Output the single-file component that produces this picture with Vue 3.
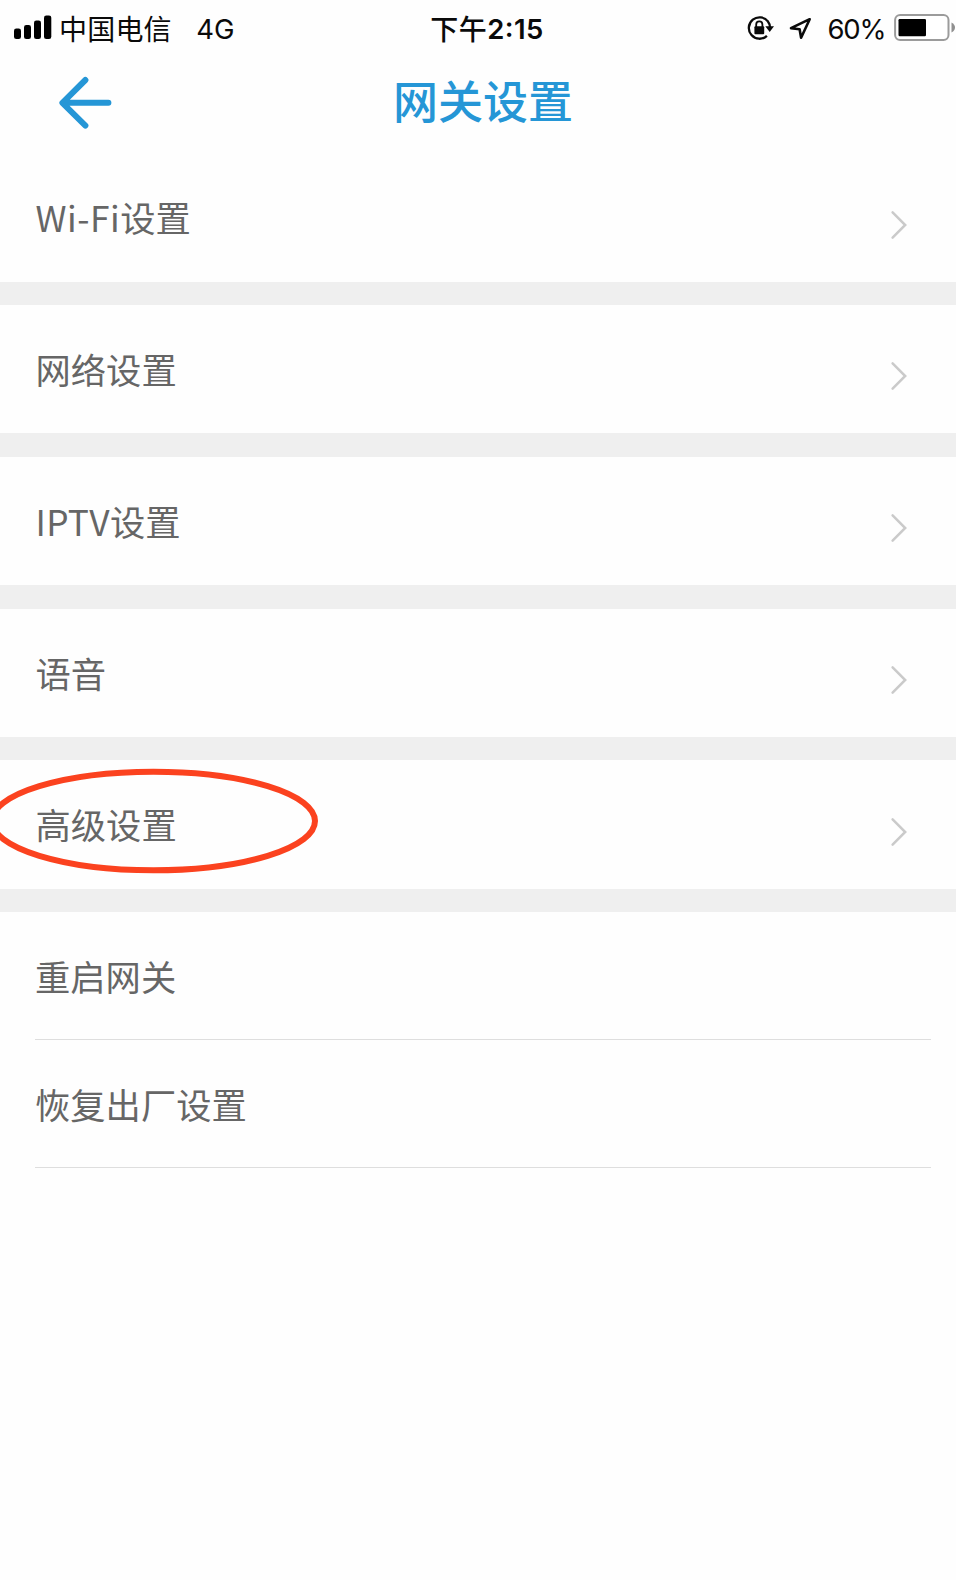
<script setup>
const rows = [
  { latin: 'Wi-Fi', text: '设置', kind: 'wifi' },
  { text: '网络设置' },
  { latin: 'IPTV', text: '设置', kind: 'iptv' },
  { text: '语音' },
  { text: '高级设置', marked: true },
]
const actions = ['重启网关', '恢复出厂设置']
</script>

<template>
  <div class="screen">
    <header class="status">
      <div class="left">
        <svg class="signal" width="38" height="25" viewBox="0 0 38 25">
          <rect x="0" y="13.5" width="7" height="10.5" rx="2.3" />
          <rect x="10" y="10" width="7" height="14" rx="2.3" />
          <rect x="20" y="5.5" width="7" height="18.5" rx="2.3" />
          <rect x="30" y="0.5" width="7.3" height="23.5" rx="2.3" />
        </svg>
        <span class="carrier">中国电信</span>
        <span class="net">4G</span>
      </div>
      <div class="time"><span class="ampm">下午</span><span class="clock">2<span class="colon">:</span>15</span></div>
      <div class="right">
        <svg class="lock" width="28" height="26" viewBox="0 0 28 26">
          <path d="M21.1 6.6A10.7 10.7 0 1 0 19.9 20.8" fill="none" stroke="#0a0a0a" stroke-width="2.3" />
          <path d="M20.8 6.2Q23 9 23 12.6" fill="none" stroke="#0a0a0a" stroke-width="2.3" />
          <path d="M18.3 11.2H27L22.7 17z" fill="#0a0a0a" />
          <rect x="7.4" y="11.2" width="9.8" height="8" rx="1" fill="#0a0a0a" />
          <path d="M9.2 12V9.4a3.1 3.1 0 0 1 6.2 0V12" fill="none" stroke="#0a0a0a" stroke-width="1.8" />
        </svg>
        <svg class="locate" width="23" height="23" viewBox="0 0 23 23">
          <path d="M20.7 2.2L2 11.2L10.6 12.3L12.1 20.8z" fill="none" stroke="#0a0a0a" stroke-width="2.6" stroke-linejoin="round" />
        </svg>
        <span class="percent">60%</span>
        <svg class="battery" width="62" height="28" viewBox="0 0 62 28">
          <rect x="1.1" y="1.1" width="53.4" height="24.9" rx="5" fill="#fff" stroke="#9b9b9b" stroke-width="2" />
          <rect x="4.5" y="5" width="27.5" height="17.3" rx="1.2" fill="#000" />
          <path d="M57.5 8.6Q61 10.5 61 13.6T57.5 18.6z" fill="#8f8f8f" />
        </svg>
      </div>
    </header>

    <nav class="bar">
      <svg class="back" width="54" height="54" viewBox="0 0 54 54">
        <path d="M27.4 4L4.4 26.8L27.4 49.6M5 26.8H50.4" fill="none" stroke="#2596d6" stroke-width="6" stroke-linecap="round" stroke-linejoin="round" />
      </svg>
      <h1>网关设置</h1>
    </nav>

    <main>
      <template v-for="row in rows" :key="row.text + row.kind">
        <section class="row">
          <span class="label"><span v-if="row.latin" :class="['latin', row.kind]">{{ row.latin }}</span>{{ row.text }}</span>
          <svg class="chevron" width="18" height="30" viewBox="0 0 18 30">
            <path d="M2.6 2.4L15.2 15L2.6 27.6" fill="none" stroke="#cacaca" stroke-width="2.5" stroke-linecap="round" />
          </svg>
          <svg v-if="row.marked" class="mark" width="324" height="108" viewBox="0 0 324 108">
            <ellipse cx="153.5" cy="54" rx="161.5" ry="49.3" fill="none" stroke="#fb421f" stroke-width="6" />
          </svg>
        </section>
        <div class="gap"></div>
      </template>
      <div v-for="a in actions" :key="a" class="action">
        <span class="label">{{ a }}</span>
        <div class="rule"></div>
      </div>
    </main>
  </div>
</template>

<style>
body { background: #fefefe; }
</style>

<style scoped>
.screen {
  width: 956px;
  height: 1580px;
  overflow: hidden;
  background: #fefefe;
  font-family: "Noto Sans CJK SC", sans-serif;
  color: #666;
}
svg { display: block; flex: none; }
.status {
  height: 56px;
  display: grid;
  grid-template-columns: 1fr auto 1fr;
  align-items: start;
  color: #0a0a0a;
  font-size: 28px;
  line-height: 56px;
  white-space: nowrap;
}
.left, .right, .time { display: flex; }
.left { padding-left: 14px; }
.signal { margin-top: 15px; }
.carrier { margin-left: 7px; letter-spacing: 0.2px; }
.net { margin-left: 24.5px; font-family: Inter, sans-serif; font-size: 27.5px; margin-top: 1px; }
.time { padding-left: 18px; }
.ampm { font-weight: 500; letter-spacing: 0.5px; }
.clock { font-family: Inter, sans-serif; font-weight: 600; font-size: 27.5px; letter-spacing: 0.4px; margin-top: 1px; }
.colon { display: inline-block; line-height: 1; transform: translateY(-2px); }
.right { justify-content: flex-end; }
.lock { margin-top: 15px; }
.locate { margin: 17px 0 0 14px; }
.percent { margin: 1px 0 0 15.5px; font-family: Inter, sans-serif; font-size: 27.5px; letter-spacing: -1.1px; }
.battery { margin: 14px 0 0 8.5px; }
.bar {
  height: 97.4px;
  display: grid;
  grid-template-columns: 1fr auto 1fr;
  align-items: start;
}
.back { margin: 19.5px 0 0 58px; }
h1 {
  margin: 11px 0 0;
  padding-left: 10px;
  font-size: 45px;
  line-height: 66px;
  font-weight: 500;
  color: #2596d6;
}
.row {
  position: relative;
  height: 128.35px;
  display: flex;
  justify-content: space-between;
  padding: 0 48.5px 0 35.5px;
}
.gap { height: 23.4px; background: #efefef; }
.label {
  font-size: 35.3px;
  line-height: 127px;
  white-space: nowrap;
}
.wifi { letter-spacing: 0.5px; }
.iptv { letter-spacing: 0.3px; }
.chevron { margin-top: 56.3px; }
.mark { position: absolute; left: 0; top: 7px; }
.action {
  height: 128.2px;
  margin: 0 25px 0 35px;
  display: flex;
  flex-direction: column;
}
.action .label { height: 127.2px; }
.rule { height: 1.5px; background: #dedede; }
</style>
